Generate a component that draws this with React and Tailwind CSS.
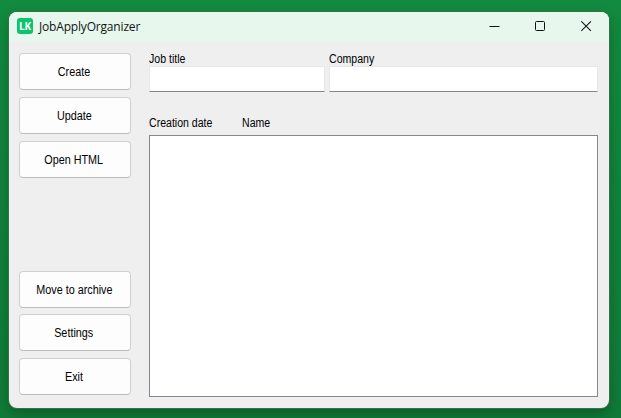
function FormButton({ children, className = "" }) {
  return (
    <button
      className={`flex h-[37px] w-28 shrink-0 items-center justify-center rounded-[4px] border border-[#d0d0d0] border-b-[#bcbcbc] bg-[#fdfdfd] pr-0.5 ${className}`}
    >
      <span className="scale-x-90 whitespace-nowrap">{children}</span>
    </button>
  );
}

function Caption({ children, className = "" }) {
  return (
    <span className={`h-[14px] leading-[14px] whitespace-nowrap ${className}`}>
      <span className="inline-block origin-left scale-x-[0.88]">{children}</span>
    </span>
  );
}

function TextField({ label, className }) {
  return (
    <label className={`flex flex-col ${className}`}>
      <Caption>{label}</Caption>
      <input className="h-[26px] w-full border border-[#e8e8e8] border-b-[#868686] bg-white outline-none" />
    </label>
  );
}

function TitleBar() {
  return (
    <header className="flex h-[30px] shrink-0 items-center bg-[#e8f7ee] pl-2">
      <div className="mb-0.5 flex size-4 items-center justify-center rounded-[3px] bg-[#0bc46c] font-['Open_Sans',sans-serif] text-[10px] leading-none font-bold tracking-[-0.2px] text-white">
        LK
      </div>
      <h1 className="ml-1.5 font-['Open_Sans',sans-serif] text-[12px] leading-4 tracking-[-0.18px] text-[#101412]">
        JobApplyOrganizer
      </h1>
      <div className="mb-0.5 ml-auto flex items-center gap-[35px] pr-[17px]">
        <svg width="11" height="12" viewBox="0 0 11 12" fill="none" stroke="#111">
          <path d="M0.5 6.5h10" />
        </svg>
        <svg width="11" height="12" viewBox="0 0 11 12" fill="none" stroke="#111">
          <rect x="0.5" y="1.5" width="9" height="9" rx="1" />
        </svg>
        <svg width="11" height="12" viewBox="0 0 11 12" fill="none" stroke="#111" strokeWidth="1.1">
          <path d="M0.3 1.3l9.6 9.6M9.9 1.3l-9.6 9.6" />
        </svg>
      </div>
    </header>
  );
}

export default function App() {
  return (
    <div className="h-[418px] w-[621px] overflow-hidden bg-linear-to-b from-[#128a3f] to-[#107b38] pt-3 pl-[9px] font-['Liberation_Sans',Arial,sans-serif] text-[12px] text-black">
      <main className="flex h-[396px] w-[600px] flex-col overflow-hidden rounded-lg bg-[#efefef] shadow-[0_0_0_1px_#34734c,0_6px_14px_rgba(0,0,0,0.26)]">
        <TitleBar />
        <div className="flex min-h-0 flex-1 pt-[11px] pr-[11px] pb-[11px] pl-2.5">
          <nav className="flex w-28 flex-col">
            <FormButton>Create</FormButton>
            <FormButton className="mt-[7px]">Update</FormButton>
            <FormButton className="mt-[7px]">Open HTML</FormButton>
            <FormButton className="mt-[93px]">Move to archive</FormButton>
            <FormButton className="mt-1.5">Settings</FormButton>
            <FormButton className="mt-[7px]">Exit</FormButton>
          </nav>
          <section className="ml-[18px] flex flex-1 flex-col">
            <div className="-mt-px flex gap-1">
              <TextField label="Job title" className="w-[176px]" />
              <TextField label="Company" className="flex-1" />
            </div>
            <div className="mt-6 flex">
              <Caption className="w-[93px]">Creation date</Caption>
              <Caption>Name</Caption>
            </div>
            <div className="mt-[5px] h-[262px] border border-[#828790] bg-white" />
          </section>
        </div>
      </main>
    </div>
  );
}
